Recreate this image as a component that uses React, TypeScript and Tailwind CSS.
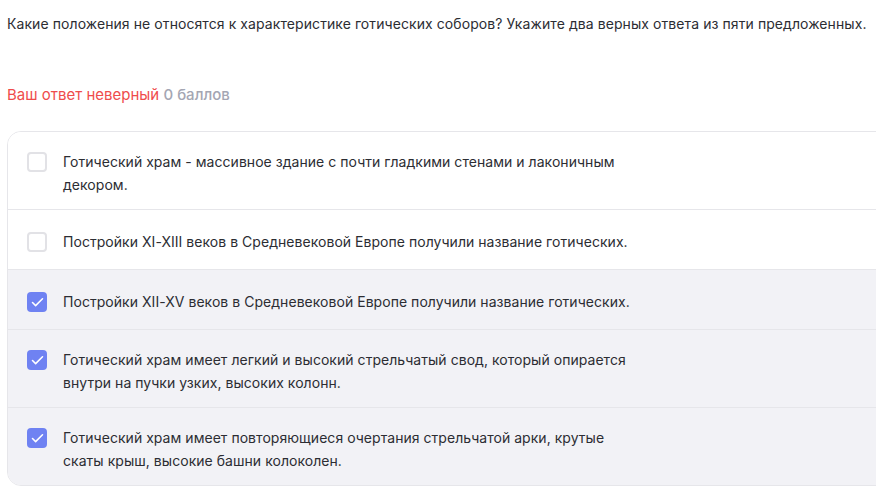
import { Check } from 'lucide-react'

const options = [
  { text: 'Готический храм - массивное здание с почти гладкими стенами и лаконичным декором.', checked: false, wrap: true },
  { text: 'Постройки XI-XIII веков в Средневековой Европе получили название готических.', checked: false, wrap: false },
  { text: 'Постройки XII-XV веков в Средневековой Европе получили название готических.', checked: true, wrap: false },
  { text: 'Готический храм имеет легкий и высокий стрельчатый свод, который опирается внутри на пучки узких, высоких колонн.', checked: true, wrap: true },
  { text: 'Готический храм имеет повторяющиеся очертания стрельчатой арки, крутые скаты крыш, высокие башни колоколен.', checked: true, wrap: true },
]

export default function App() {
  return (
    <div className="w-[876px] h-[489px] overflow-hidden bg-white pl-[7px] font-['Inter',sans-serif] text-[14px] text-[#2c2d33]">
      {/* Question */}
      <p className="pt-[14px] leading-[20px] tracking-[0.08px]">
        Какие положения не относятся к характеристике готических соборов? Укажите два верных ответа из пяти предложенных.
      </p>

      {/* Result */}
      <p className="mt-[50px] text-[15px] leading-[22px]">
        <span className="text-[#ef4c4c]">Ваш ответ неверный</span>{' '}
        <span className="font-medium text-[#a4a6b3]">0 баллов</span>
      </p>

      {/* Options */}
      <div className="mt-[25px] w-[900px] rounded-[14px] border border-[#e6e6ea] overflow-hidden">
        {options.map((o, i) => (
          <div
            key={i}
            className={`flex items-start gap-4 pl-[19px] ${o.wrap ? 'pt-[18px] pb-[13px]' : 'pt-[20px] pb-[16px]'} ${
              i > 0 ? 'border-t border-[#e6e6ea]' : ''
            } ${o.checked ? 'bg-[#f2f2f6]' : 'bg-white'}`}
          >
            {o.checked ? (
              <div className="mt-[2px] flex h-5 w-5 shrink-0 items-center justify-center rounded-[4px] bg-[#6f82f2]">
                <Check size={15} strokeWidth={2.5} className="text-white" />
              </div>
            ) : (
              <div className="mt-[2px] h-5 w-5 shrink-0 rounded-[4px] border-2 border-[#e2e2e6] bg-white" />
            )}
            <p className="max-w-[575px] leading-[23px] tracking-[0.04px]">{o.text}</p>
          </div>
        ))}
      </div>
    </div>
  )
}
